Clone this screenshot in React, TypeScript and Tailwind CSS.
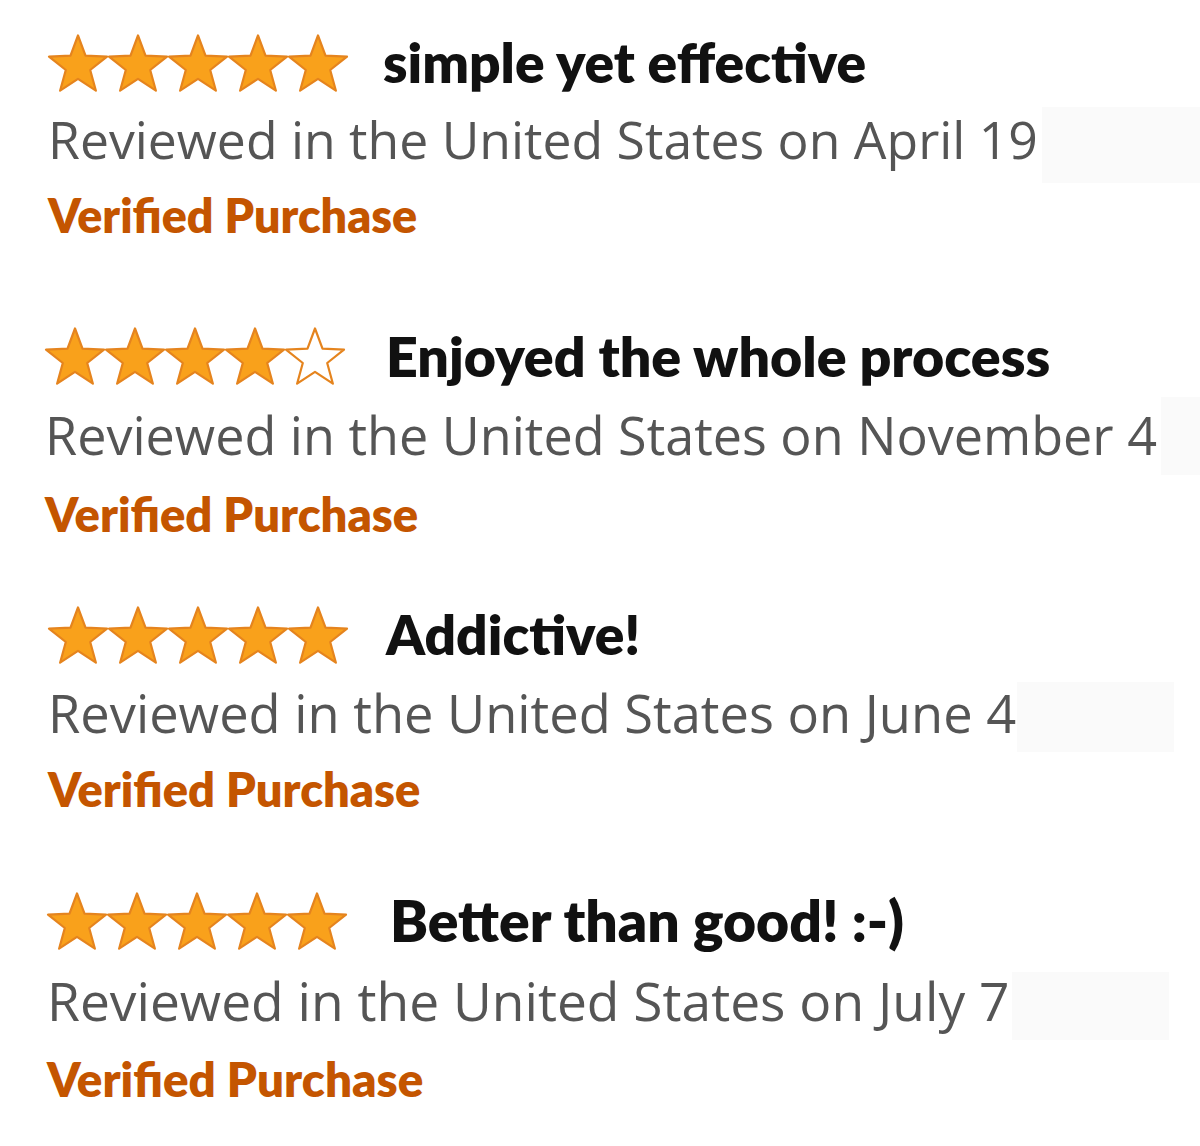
import React from "react";

interface Review {
  stars: number;
  title: string;
  date: string;
  // the four snippets were pasted from different screenshots, so each
  // one carries its own small size / offset tweaks
  gap: number;
  dx: number;
  titleMl: number;
  titleSize: number;
  grayPt: number;
  graySize: number;
  verPt: number;
  verSize: number;
  patch: { ml: number; mt: number; w: number; h: number };
}

const reviews: Review[] = [
  {
    stars: 5,
    title: "simple yet effective",
    date: "April 19",
    gap: 0,
    dx: 0,
    titleMl: 35,
    titleSize: 55,
    grayPt: 14,
    graySize: 51.7,
    verPt: 17,
    verSize: 46.6,
    patch: { ml: 4, mt: 7, w: 160, h: 76 },
  },
  {
    stars: 4,
    title: "Enjoyed the whole process",
    date: "November 4",
    gap: 68,
    dx: -3,
    titleMl: 41,
    titleSize: 55.5,
    grayPt: 16,
    graySize: 52.1,
    verPt: 23,
    verSize: 47.1,
    patch: { ml: 4, mt: 4, w: 45, h: 78 },
  },
  {
    stars: 5,
    title: "Addictive!",
    date: "June 4",
    gap: 54,
    dx: 0,
    titleMl: 38,
    titleSize: 55,
    grayPt: 15,
    graySize: 52.4,
    verPt: 19,
    verSize: 47,
    patch: { ml: 1, mt: 10, w: 157, h: 70 },
  },
  {
    stars: 5,
    title: "Better than good! :-)",
    date: "July 7",
    gap: 61,
    dx: -1,
    titleMl: 43,
    titleSize: 57,
    grayPt: 16,
    graySize: 53.3,
    verPt: 22,
    verSize: 47.5,
    patch: { ml: 3, mt: 14, w: 157, h: 68 },
  },
];

const Star = ({ filled }: { filled: boolean }) => (
  <svg width="60" height="58" viewBox="0 -0.5 60 58" className="shrink-0 overflow-visible">
    <polygon
      points="30,1 37.5,21.1 59,22.1 42.2,35.5 47.9,56.2 30,44.3 12.1,56.2 17.8,35.5 1,22.1 22.5,21.1"
      fill={filled ? "#f9a11b" : "#ffffff"}
      stroke="#e5841e"
      strokeWidth="2.2"
      strokeLinejoin="round"
    />
  </svg>
);

const ReviewRow = ({ item }: { item: Review }) => (
  <div className="flex flex-col" style={{ marginTop: item.gap, marginLeft: item.dx }}>
    <div className="flex h-[75px] items-center">
      <div className="flex">
        {[0, 1, 2, 3, 4].map((i) => (
          <Star key={i} filled={i < item.stars} />
        ))}
      </div>
      <h3
        className="whitespace-nowrap font-['Lato',sans-serif] font-extrabold leading-none text-[#111111]"
        style={{ marginLeft: item.titleMl, fontSize: item.titleSize }}
      >
        {item.title}
      </h3>
    </div>
    <div className="flex h-[75px] items-start whitespace-nowrap font-['Open_Sans',sans-serif] leading-none text-[#555555]">
      <span style={{ paddingTop: item.grayPt, fontSize: item.graySize }}>
        Reviewed in the United States on {item.date}
      </span>
      <span
        className="inline-block shrink-0 bg-[#fafafa]"
        style={{
          marginLeft: item.patch.ml,
          marginTop: item.patch.mt,
          width: item.patch.w,
          height: item.patch.h,
        }}
      />
    </div>
    <div className="flex h-[75px] items-start">
      <span
        className="font-['Lato',sans-serif] font-extrabold leading-none text-[#c45500]"
        style={{ paddingTop: item.verPt, fontSize: item.verSize }}
      >
        Verified Purchase
      </span>
    </div>
  </div>
);

export default function App() {
  return (
    <div className="h-[1146px] w-[1200px] overflow-hidden bg-white pl-[48px] pt-[25px]">
      <div className="flex flex-col">
        {reviews.map((item, i) => (
          <ReviewRow key={i} item={item} />
        ))}
      </div>
    </div>
  );
}
